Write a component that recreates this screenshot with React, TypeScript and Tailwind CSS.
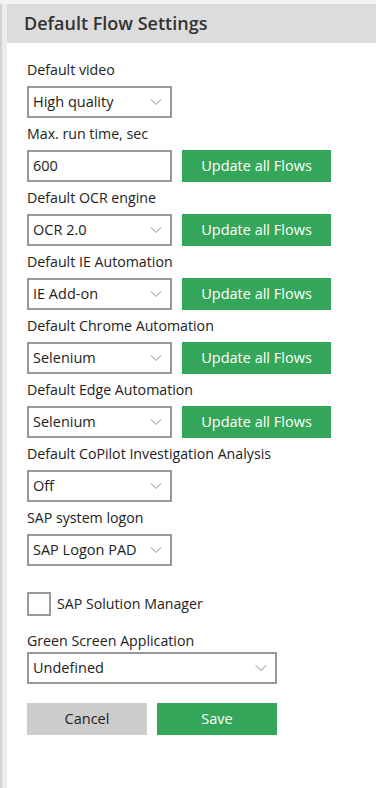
import { ChevronDown } from 'lucide-react'

const font = { fontFamily: '"Open Sans", "Noto Sans", Arial, sans-serif' }

function Select({ value, wide }: { value: string; wide?: boolean }) {
  return (
    <div
      className={`flex h-8 items-center justify-between border-2 border-[#999999] bg-white pl-[4px] pr-[4px] text-[14.5px] text-[#222] ${
        wide ? 'w-[250px]' : 'w-[145px]'
      }`}
    >
      <span>{value}</span>
      <ChevronDown size={20} strokeWidth={1.2} className="text-[#888]" />
    </div>
  )
}

function UpdateButton() {
  return (
    <button className="flex h-8 w-[149px] items-center justify-center bg-[#34a65a] text-[14.5px] text-white">
      Update all Flows
    </button>
  )
}

function Field({
  label,
  value,
  update,
  input,
}: {
  label: string
  value: string
  update?: boolean
  input?: boolean
}) {
  return (
    <div>
      <div className="flex h-8 items-center text-[14.2px] text-[#222]">{label}</div>
      <div className="flex items-center gap-[10px]">
        {input ? (
          <div className="flex h-8 w-[145px] items-center border-2 border-[#999999] bg-white pl-[4px] text-[14.5px] text-[#222]">
            {value}
          </div>
        ) : (
          <Select value={value} />
        )}
        {update && <UpdateButton />}
      </div>
    </div>
  )
}

export default function App() {
  return (
    <div className="flex h-[788px] w-[376px] flex-col bg-[#f1f2f4]" style={font}>
      <div className="h-[4px] shrink-0" />
      <div className="flex flex-1">
        <div className="flex w-[7px] shrink-0">
          <div className="w-[2px] bg-[#d2d2d2]" />
          <div className="w-[5px] bg-[#ececec]" />
        </div>
        <div className="flex flex-1 flex-col bg-white">
          <div className="flex h-[39px] items-center bg-[#dcdcdc] pl-[17px] text-[18px] font-semibold text-[#333]">
            Default Flow Settings
          </div>
          <div className="flex flex-col pl-[20px] pt-[11px]">
            <Field label="Default video" value="High quality" />
            <Field label="Max. run time, sec" value="600" input update />
            <Field label="Default OCR engine" value="OCR 2.0" update />
            <Field label="Default IE Automation" value="IE Add-on" update />
            <Field label="Default Chrome Automation" value="Selenium" update />
            <Field label="Default Edge Automation" value="Selenium" update />
            <Field label="Default CoPilot Investigation Analysis" value="Off" />
            <Field label="SAP system logon" value="SAP Logon PAD" />
            <div className="mt-[26px] flex items-center gap-[6px]">
              <div className="h-[24px] w-[24px] border-2 border-[#999999] bg-white" />
              <span className="text-[14.2px] text-[#222]">SAP Solution Manager</span>
            </div>
            <div className="mt-[13px] flex h-[23px] items-center text-[14.2px] text-[#222]">
              Green Screen Application
            </div>
            <Select value="Undefined" wide />
            <div className="mt-[19px] flex gap-[10px]">
              <button className="flex h-8 w-[120px] items-center justify-center bg-[#cccccc] text-[14.5px] text-[#222]">
                Cancel
              </button>
              <button className="flex h-8 w-[120px] items-center justify-center bg-[#34a65a] text-[14.5px] text-white">
                Save
              </button>
            </div>
          </div>
        </div>
      </div>
    </div>
  )
}
